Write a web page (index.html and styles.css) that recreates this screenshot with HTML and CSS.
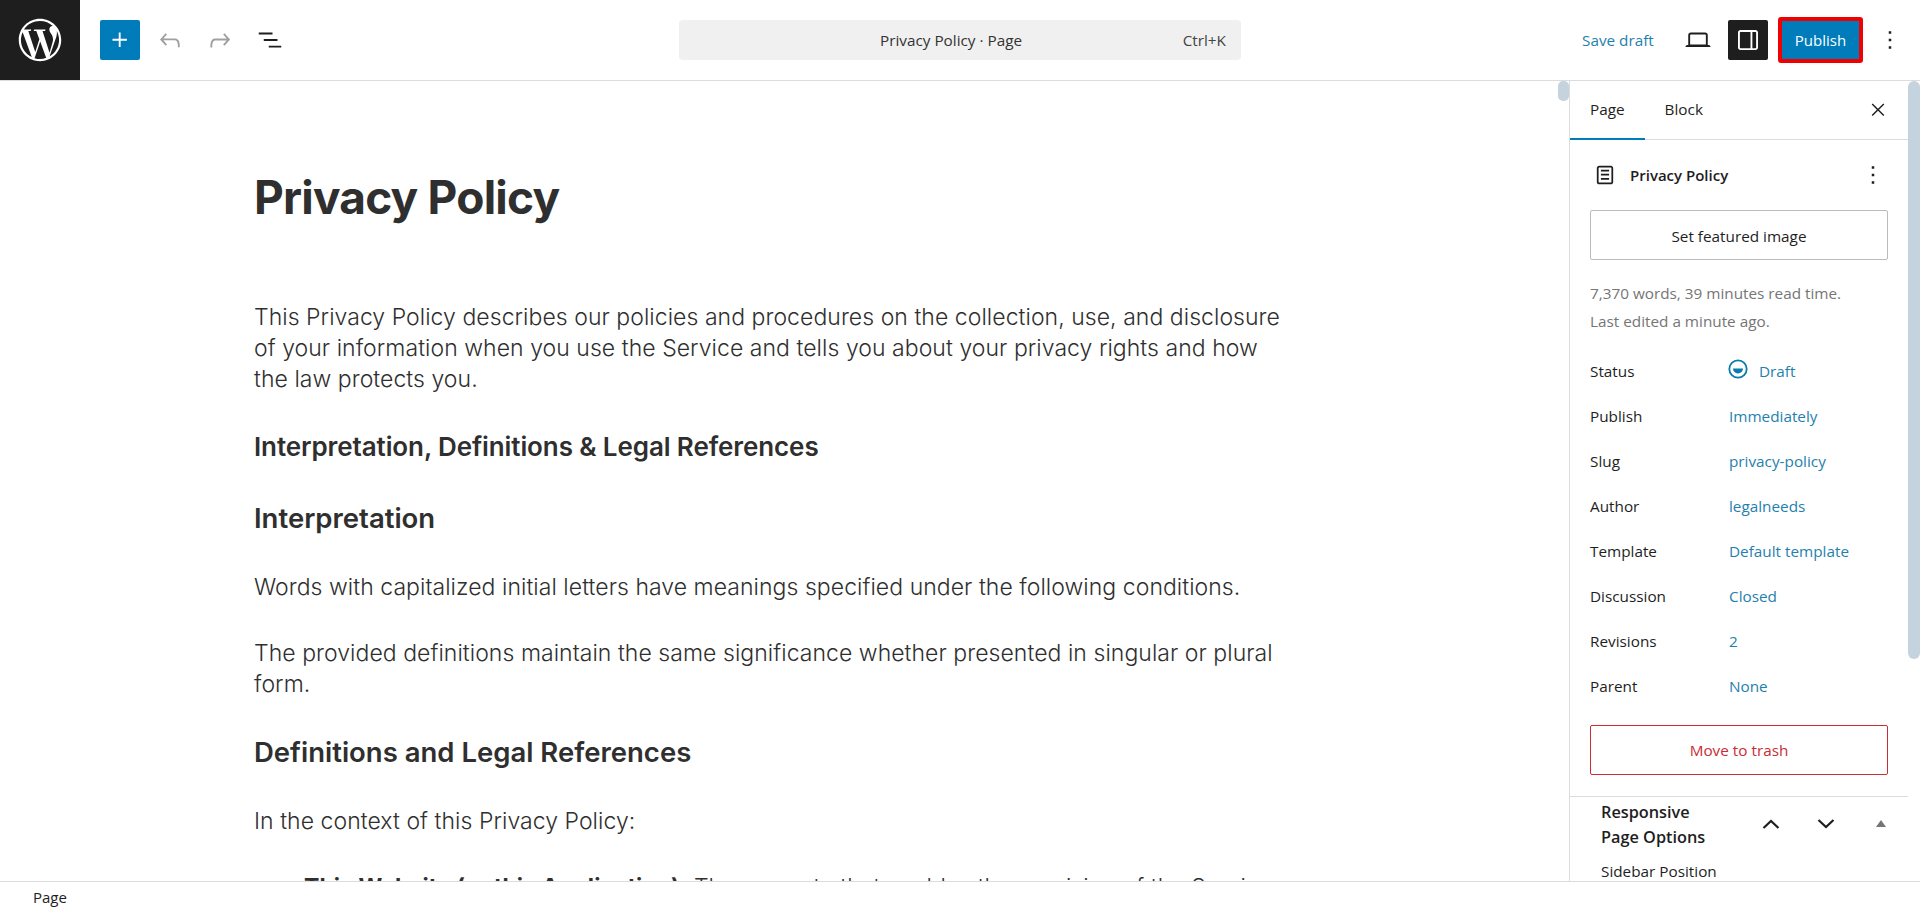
FILE: index.html
```html
<!DOCTYPE HTML>
<html>

<head>
    <meta charset="utf-8">
    <title>Privacy Policy</title>
    <link rel="stylesheet" href="styles.css">
</head>

<body>
    <div class="topbar">
        <div class="logo">
            <svg width="52" height="52" viewBox="0 0 24 24" fill="#fff"><path d="M12 2.2c-5.4 0-9.8 4.4-9.8 9.8s4.4 9.8 9.8 9.8 9.8-4.4 9.8-9.8S17.400 2.200 12 2.200zM3.200 12c0-1.300.3-2.500.8-3.600l4.200 11.500C5.300 18.400 3.200 15.500 3.200 12zm8.800 8.800c-.9 0-1.700-.1-2.500-.4l2.600-7.700 2.700 7.400c0 0 0 .1.100.1-.9.400-1.900.6-2.900.6zm1.200-12.900c.5 0 1-.1 1-.1.500-.1.400-.8-.1-.7 0 0-1.400.1-2.300.1-.9 0-2.300-.1-2.300-.1-.5 0-.5.700-.1.700 0 0 .5.100.9.100l1.400 3.800-1.900 5.800-3.200-9.600c.5 0 1-.1 1-.1.500-.1.400-.8-.1-.7 0 0-1.400.1-2.300.1h-.6C6.300 4.500 9 3.200 12 3.200c2.300 0 4.400.9 5.900 2.300h-.1c-.9 0-1.500.8-1.500 1.600 0 .7.400 1.300.9 2.100.4.600.8 1.400.8 2.600 0 .8-.3 1.700-.7 3l-.9 3.100-3.200-9.900zm3.200 11.700l2.700-7.800c.5-1.300.7-2.300.7-3.200 0-.3 0-.6-.1-.9.700 1.300 1.100 2.700 1.100 4.300 0 3.200-1.800 6.100-4.400 7.600z"/></svg>
        </div>
        <div class="tools">
            <button class="add-btn">
                <svg width="30" height="30" viewBox="0 0 24 24" fill="#fff"><path d="M11 12.500V17.500H12.500V12.500H17.500V11H12.500V6H11V11H6V12.500H11Z"/></svg>
            </button>
            <svg class="tool-icon" width="30" height="30" viewBox="0 0 24 24" fill="#a0a0a0"><path d="M18.300 11.700c-.6-.6-1.400-.9-2.300-.9H6.700l2.900-3.300-1.100-1-4.500 5L8.500 16.500l1.100-1-2.900-3.300H16c.5 0 .9.200 1.300.5 1 1 1 3.400 1 4.500v.5h1.500v-.5c0-1.500 0-4.300-1.500-5.700z"/></svg>
            <svg class="tool-icon" width="30" height="30" viewBox="0 0 24 24" fill="#a0a0a0"><path d="M15.600 6.500l-1.100 1 2.900 3.300H8c-.9 0-1.700.3-2.300.9-1.400 1.500-1.400 4.200-1.400 5.700v.5h1.500v-.5c0-1 0-3.500 1-4.500.3-.3.700-.5 1.300-.5h9.200L14.500 15.500l1.100 1.100 4.500-5-4.500-5.100z"/></svg>
            <svg class="tool-icon" width="30" height="30" viewBox="0 0 24 24" fill="#1e1e1e"><path d="M3 6H14V7.500H3V6ZM7 11.250H18V12.750H7V11.250ZM11 16.500H21V18H11V16.500Z"/></svg>
        </div>
        <div class="search-wrap">
            <div class="search">
                <span class="search-title">Privacy Policy · Page</span>
                <span class="search-key">Ctrl+K</span>
            </div>
        </div>
        <div class="actions">
            <span class="save">Save draft</span>
            <svg class="view-icon" width="30" height="30" viewBox="0 0 24 24" fill="#1e1e1e"><path d="M20.500 16h-.7V8c0-1.100-.9-2-2-2H6.200c-1.100 0-2 .9-2 2v8h-.7c-.8 0-1.500.7-1.500 1.500h20c0-.8-.7-1.500-1.500-1.500zM5.700 8c0-.3.200-.5.500-.5h11.600c.3 0 .5.200.5.500v7.600H5.700V8z"/></svg>
            <div class="panel-btn">
                <svg width="30" height="30" viewBox="0 0 24 24" fill="#fff"><path d="M18 4H6c-1.100 0-2 .9-2 2v12c0 1.100.9 2 2 2h12c1.100 0 2-.9 2-2V6c0-1.100-.9-2-2-2zM5.500 18V6c0-.3.200-.5.500-.5h8v13H6c-.3 0-.5-.2-.5-.5zm13 0c0 .3-.2.500-.5.500h-2.500v-13H18c.3 0 .5.200.5.500v12z"/></svg>
            </div>
            <div class="publish-outline">
                <div class="publish">Publish</div>
            </div>
            <svg class="more-icon" width="30" height="30" viewBox="0 0 24 24" fill="#1e1e1e"><path d="M13 19h-2v-2h2v2zm0-6h-2v-2h2v2zm0-6h-2V5h2v2z"/></svg>
        </div>
    </div>

    <div class="main">
        <div class="editor">
            <div class="scroll-thumb"></div>
            <div class="content">
                <h1>Privacy Policy</h1>
                <p class="first">This Privacy Policy describes our policies and procedures on the collection, use, and disclosure of your information when you use the Service and tells you about your privacy rights and how the law protects you.</p>
                <h2>Interpretation, Definitions &amp; Legal References</h2>
                <h2 class="big">Interpretation</h2>
                <p>Words with capitalized initial letters have meanings specified under the following conditions.</p>
                <p>The provided definitions maintain the same significance whether presented in singular or plural form.</p>
                <h2 class="big">Definitions and Legal References</h2>
                <p>In the context of this Privacy Policy:</p>
                <ul>
                    <li><b>This Website (or this Application):</b> The property that enables the provision of the Service.</li>
                </ul>
            </div>
        </div>

        <div class="sidebar">
            <div class="tabs">
                <div class="tab active">Page</div>
                <div class="tab">Block</div>
                <svg class="close" width="24" height="24" viewBox="0 0 24 24" fill="#1e1e1e"><path d="M13 11.800l5.300-5.300-1-1.100-5.300 5.300-5.300-5.300-1 1.100 5.200 5.300-5.200 5.200 1 1.100 5.300-5.300 5.300 5.300 1-1.100-5.300-5.200z"/></svg>
            </div>
            <div class="panel">
                <div class="doc-head">
                    <svg width="28" height="28" viewBox="0 0 24 24" fill="#1e1e1e"><path d="M15.500 7.500h-7V9h7V7.500zm-7 3.500h7v1.500h-7V11zm7 3.500h-7V16h7v-1.500z"/><path d="M17 4H7c-1.100 0-2 .9-2 2v12c0 1.100.9 2 2 2h10c1.100 0 2-.9 2-2V6c0-1.100-.9-2-2-2zm.5 14c0 .3-.2.500-.5.500H7c-.3 0-.5-.2-.5-.5V6c0-.3.200-.5.500-.5h10c.3 0 .5.200.5.500v12z"/></svg>
                    <span class="doc-title">Privacy Policy</span>
                    <svg class="doc-more" width="30" height="30" viewBox="0 0 24 24" fill="#1e1e1e"><path d="M13 19h-2v-2h2v2zm0-6h-2v-2h2v2zm0-6h-2V5h2v2z"/></svg>
                </div>
                <div class="featured">Set featured image</div>
                <div class="stats">7,370 words, 39 minutes read time.<br>Last edited a minute ago.</div>
                <div class="rows">
                    <div class="row"><span class="label">Status</span><span class="value">
                        <svg class="draft-icon" width="20" height="20" viewBox="0 0 20 20"><circle cx="10" cy="10" r="8.700" fill="none" stroke="#0a7aaf" stroke-width="1.800"/><path d="M5 9.500h10a5 5 0 0 1-10 0z" fill="#0a7aaf"/></svg>Draft</span></div>
                    <div class="row"><span class="label">Publish</span><span class="value">Immediately</span></div>
                    <div class="row"><span class="label">Slug</span><span class="value">privacy-policy</span></div>
                    <div class="row"><span class="label">Author</span><span class="value">legalneeds</span></div>
                    <div class="row"><span class="label">Template</span><span class="value">Default template</span></div>
                    <div class="row"><span class="label">Discussion</span><span class="value">Closed</span></div>
                    <div class="row"><span class="label">Revisions</span><span class="value">2</span></div>
                    <div class="row"><span class="label">Parent</span><span class="value">None</span></div>
                </div>
                <div class="trash">Move to trash</div>
            </div>
            <div class="options">
                <div class="options-head">
                    <div class="options-title">Responsive<br>Page Options</div>
                    <svg class="chev-up" width="24" height="24" viewBox="0 0 24 24" fill="none" stroke="#1e1e1e" stroke-width="2.200"><path d="M4.500 16l7.500-7 7.500 7"/></svg>
                    <svg class="chev-down" width="24" height="24" viewBox="0 0 24 24" fill="none" stroke="#1e1e1e" stroke-width="2.200"><path d="M4.500 8l7.500 7 7.500-7"/></svg>
                    <span class="tri"></span>
                </div>
                <div class="options-label">Sidebar Position</div>
            </div>
        </div>
        <div class="side-scroll"><div class="side-thumb"></div></div>
    </div>

    <div class="statusbar">Page</div>
</body>

</html>
```

FILE: styles.css
```css
* {
    box-sizing: border-box;
}

html, body {
    height: 100%;
    margin: 0;
    overflow: hidden;
}

body {
    display: flex;
    flex-direction: column;
    background: #fff;
    color: #1e1e1e;
    font-family: "Open Sans", "Noto Sans", sans-serif;
    font-size: 15px;
}

/* top toolbar */
.topbar {
    display: flex;
    align-items: center;
    height: 81px;
    flex: none;
    border-bottom: 1px solid #dcdcdc;
}

.logo {
    display: flex;
    align-items: center;
    justify-content: center;
    width: 80px;
    height: 80px;
    background: #1e1e1e;
}

.tools {
    display: flex;
    align-items: center;
    width: 599px;
    padding-left: 20px;
}

.add-btn {
    display: flex;
    align-items: center;
    justify-content: center;
    width: 40px;
    height: 40px;
    padding: 0;
    border: 0;
    border-radius: 2px;
    background: #007cba;
}

.tool-icon {
    margin-left: 20px;
}

.add-btn + .tool-icon {
    margin-left: 15px;
}

.search-wrap {
    width: 562px;
}

.search {
    display: flex;
    align-items: center;
    justify-content: space-between;
    height: 40px;
    padding: 0 15px 0 201px;
    border-radius: 4px;
    background: #f0f0f0;
    font-size: 15.300px;
}

.search-title {
    color: #333;
}

.search-key {
    color: #444;
}

.actions {
    display: flex;
    align-items: center;
    flex: 1;
    padding-left: 341px;
}

.save {
    width: 101px;
    color: #1f81ad;
    font-size: 15.300px;
}

.view-icon {
    margin-right: 15px;
}

.panel-btn {
    display: flex;
    align-items: center;
    justify-content: center;
    width: 40px;
    height: 40px;
    margin-right: 10px;
    border-radius: 2px;
    background: #1e1e1e;
}

.publish-outline {
    width: 85px;
    height: 46px;
    padding: 4px;
    border-radius: 3px;
    background: #f00000;
}

.publish {
    height: 38px;
    background: #007cba;
    color: #fff;
    font-size: 15px;
    line-height: 38px;
    text-align: center;
}

.more-icon {
    margin-left: 12px;
}

/* editor and sidebar */
.main {
    display: flex;
    flex: 1;
    min-height: 0;
}

.editor {
    position: relative;
    flex: 1;
    min-width: 0;
    overflow: hidden;
}

.scroll-thumb {
    position: absolute;
    top: 0;
    right: 0;
    width: 11px;
    height: 20px;
    border-radius: 5px;
    background: #c5d3de;
}

.content {
    width: 1040px;
    margin-left: 254px;
    padding-top: 86px;
    color: #2f2f2f;
    font-family: Inter, "Noto Sans", sans-serif;
    font-size: 23px;
    font-weight: 300;
    letter-spacing: 0.05px;
    line-height: 31px;
}

h1 {
    margin: 0 0 75px;
    font-size: 46px;
    font-weight: 700;
    letter-spacing: -0.8px;
    line-height: 60px;
}

p {
    margin: 0 0 35px;
}

h2 {
    margin: 0 0 37px;
    font-size: 26px;
    font-weight: 600;
    letter-spacing: -0.1px;
    line-height: 34px;
}

h2.big {
    font-size: 27.500px;
    letter-spacing: 0;
}

ul {
    margin: 0;
    padding-left: 50px;
    list-style: none;
}

b {
    font-weight: 700;
}

/* sidebar */
.sidebar {
    width: 339px;
    flex: none;
    overflow: hidden;
    border-left: 1px solid #dcdcdc;
}

.tabs {
    display: flex;
    align-items: center;
    height: 59px;
    border-bottom: 1px solid #dcdcdc;
}

.tab {
    height: 59px;
    padding: 0 20px;
    font-size: 15.300px;
    line-height: 57px;
}

.tab.active {
    border-bottom: 2px solid #007cba;
}

.close {
    margin-left: auto;
    margin-right: 18px;
}

.panel {
    padding: 0 20px 21px;
    border-bottom: 1px solid #dcdcdc;
}

.doc-head {
    display: flex;
    align-items: center;
    height: 70px;
    padding-left: 1px;
}

.doc-title {
    margin-left: 11px;
    font-size: 15px;
    font-weight: 600;
}

.doc-more {
    margin-left: auto;
}

.featured {
    height: 50px;
    border: 1px solid #bbb;
    border-radius: 2px;
    font-size: 15.300px;
    line-height: 50px;
    text-align: center;
}

.stats {
    margin-top: 19px;
    color: #757575;
    font-size: 15.300px;
    line-height: 28px;
}

.rows {
    margin-top: 13px;
}

.row {
    display: flex;
    align-items: center;
    height: 45px;
    font-size: 15.300px;
}

.label {
    width: 139px;
}

.value {
    display: flex;
    align-items: center;
    color: #1f81ad;
}

.draft-icon {
    margin: -3px 11px 0 -1px;
}

.trash {
    height: 50px;
    margin-top: 17px;
    border: 1px solid #c92c33;
    border-radius: 2px;
    color: #c92c33;
    font-size: 15.300px;
    line-height: 48px;
    text-align: center;
}

.options {
    padding: 3px 0 0 31px;
}

.options-head {
    display: flex;
    align-items: flex-start;
}

.options-title {
    width: 158px;
    font-size: 16.300px;
    font-weight: 600;
    line-height: 25px;
}

.chev-up {
    margin-top: 12px;
}

.chev-down {
    margin: 12px 0 0 31px;
}

.tri {
    width: 0;
    height: 0;
    margin: 20px 0 0 38px;
    border-right: 5px solid transparent;
    border-bottom: 7px solid #757575;
    border-left: 5px solid transparent;
}

.options-label {
    margin-top: 11px;
    font-size: 15.300px;
    line-height: 20px;
}

.side-scroll {
    width: 12px;
    flex: none;
}

.side-thumb {
    height: 578px;
    border-radius: 6px;
    background: #c5d3de;
}

/* bottom bar */
.statusbar {
    height: 31px;
    flex: none;
    padding-left: 33px;
    border-top: 1px solid #dcdcdc;
    background: #fff;
    font-size: 15px;
    line-height: 31px;
}
```
